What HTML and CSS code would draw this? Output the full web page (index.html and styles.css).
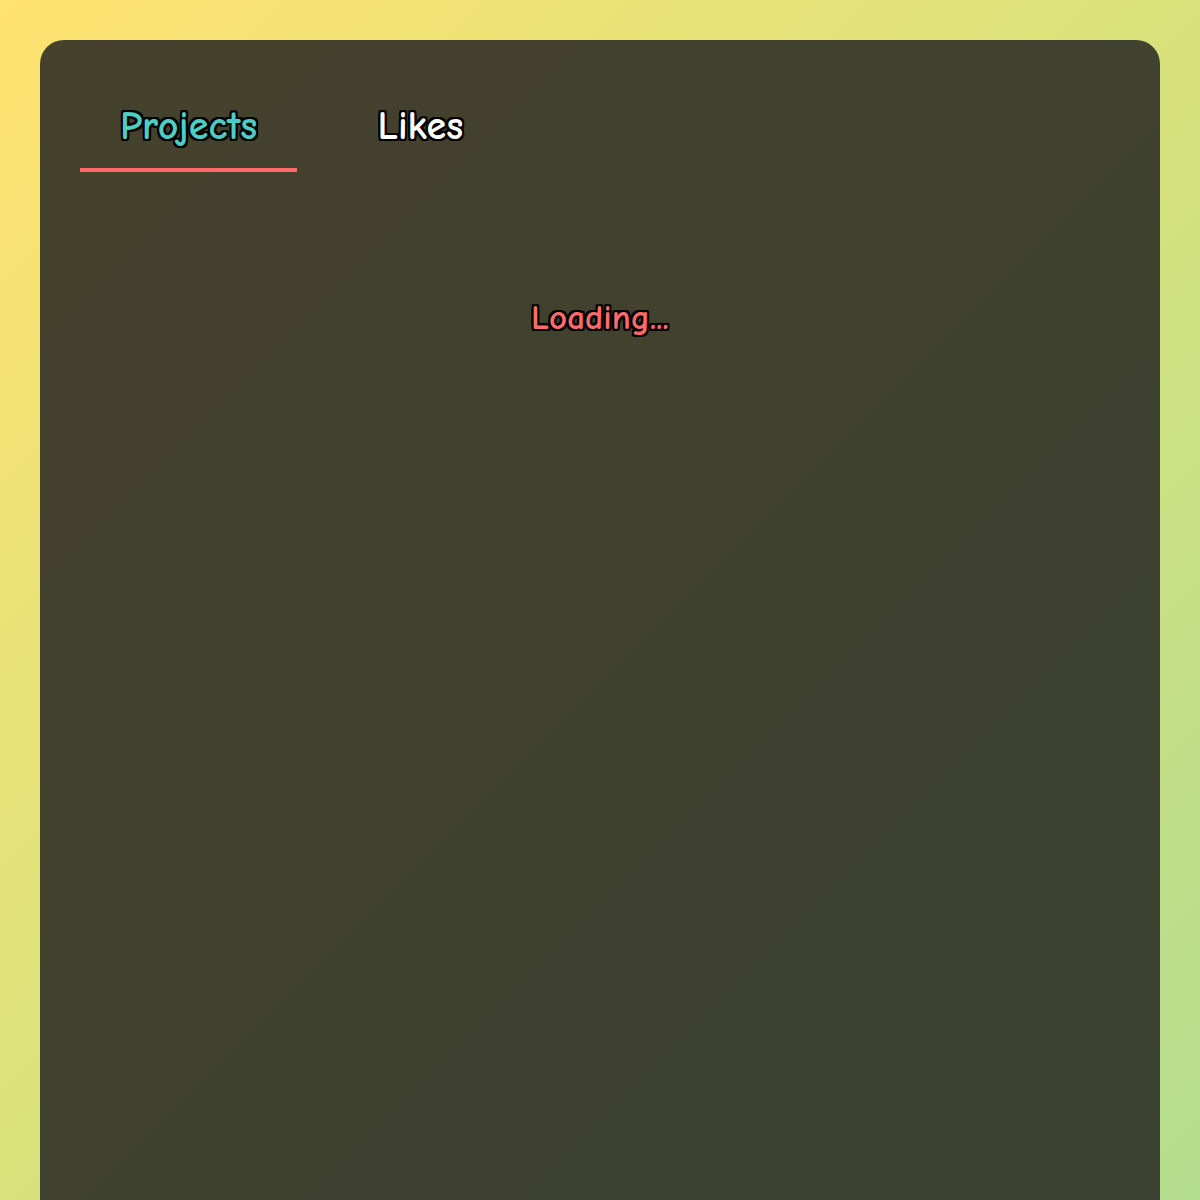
FILE: index.html
```html
<!DOCTYPE html>
<html lang="en">
<head>
<meta charset="utf-8">
<title>Profile</title>
<link rel="stylesheet" href="styles.css">
</head>
<body>
<main class="card">
  <nav class="tabs">
    <button class="tab tab-active">Projects</button>
    <button class="tab">Likes</button>
  </nav>
  <section class="content">
    <p class="loading">Loading...</p>
  </section>
</main>
</body>
</html>
```

FILE: styles.css
```css
html, body {
  margin: 0;
  padding: 0;
  height: 100%;
}
body {
  background: linear-gradient(135deg, #ffe270 0%, #d9e27c 50%, #b3dd8f 100%);
  font-family: "Comic Sans MS", "Comic Neue", "Lato", sans-serif;
  padding: 40px 40px 0;
  box-sizing: border-box;
  overflow: hidden;
}
.card {
  background: rgba(38, 38, 34, 0.86);
  border-radius: 24px;
  padding: 40px;
  min-height: 1300px;
  box-sizing: border-box;
}
.tabs {
  display: flex;
  gap: 40px;
}
.tab {
  font-family: inherit;
  font-weight: 700;
  background: none;
  border: none;
  border-bottom: 4px solid transparent;
  padding: 22px 40px 18px;
  font-size: 40px;
  line-height: 48px;
  color: #ffffff;
  cursor: pointer;
  text-shadow: -2px -2px 0 #000, 2px -2px 0 #000, -2px 2px 0 #000, 2px 2px 0 #000, 0 2px 0 #000, 0 -2px 0 #000, 2px 0 0 #000, -2px 0 0 #000;
}
.tab-active {
  color: #4ecdc4;
  border-bottom-color: #ff6b6b;
}
.content {
  padding-top: 120px;
  text-align: center;
}
.loading {
  margin: 0;
  font-weight: 700;
  font-size: 35px;
  line-height: 52px;
  color: #ff6b6b;
  text-shadow: -2px -2px 0 #000, 2px -2px 0 #000, -2px 2px 0 #000, 2px 2px 0 #000, 0 2px 0 #000, 0 -2px 0 #000, 2px 0 0 #000, -2px 0 0 #000;
}
```
